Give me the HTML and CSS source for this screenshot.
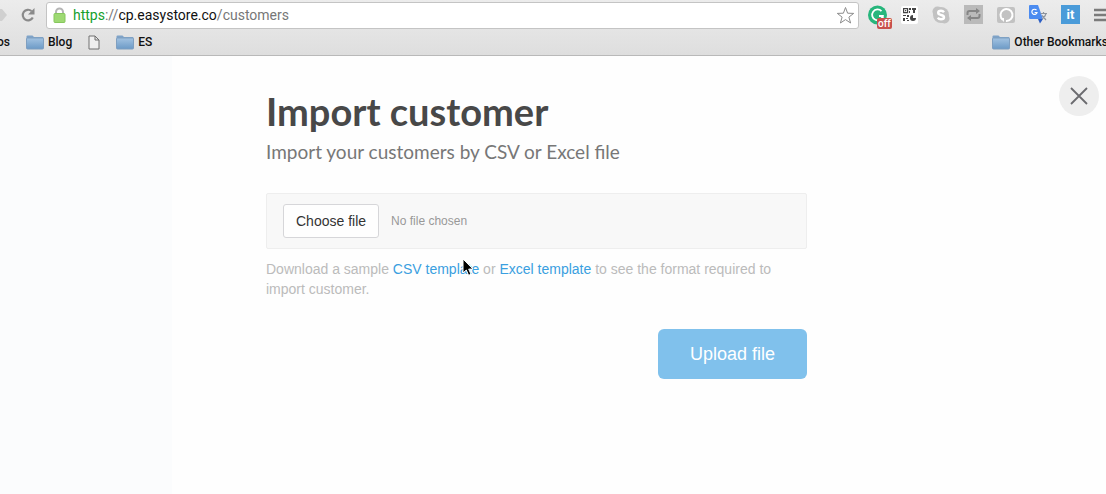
FILE: index.html
```html
<!DOCTYPE html>
<html lang="en">
<head>
    <meta charset="UTF-8">
    <meta name="viewport" content="width=device-width, initial-scale=1.0">
    <title>Import customer</title>
    <link rel="stylesheet" href="styles.css">
</head>
<body>
    <svg width="0" height="0" class="defs" aria-hidden="true">
        <defs>
            <linearGradient id="folderFill" x1="0" y1="0" x2="0" y2="1">
                <stop offset="0" stop-color="#a3c3e2"/>
                <stop offset="1" stop-color="#6c9ac6"/>
            </linearGradient>
            <symbol id="folder" viewBox="0 0 18 15">
                <path d="M0.500 4V1.500q0-1 1-1h5L8 2h8.500q1 0 1 1v1z" fill="#7fa3c8"/>
                <rect x="0.500" y="3" width="17" height="11" rx="1" fill="url(#folderFill)" stroke="#7f9fc0"/>
            </symbol>
        </defs>
    </svg>

    <header class="browser">
        <div class="toolbar">
            <button class="icon-btn" aria-label="Forward">
                <svg width="8" height="16" viewBox="0 0 8 16"><path d="M0 2h2l5 6-5 6H0z" fill="#d0d0d0"/></svg>
            </button>
            <button class="icon-btn reload" aria-label="Reload">
                <svg width="16" height="16" viewBox="0 0 16 16">
                    <path d="M12.800 10.500A5.300 5.300 0 1 1 11.500 4" fill="none" stroke="#8a8a8a" stroke-width="2.200"/>
                    <path d="M14.500 1v6.500H8z" fill="#8a8a8a"/>
                </svg>
            </button>
            <div class="address">
                <svg width="13" height="17" viewBox="0 0 13 17">
                    <path d="M3 8V5a3.500 3.500 0 0 1 7 0v3" fill="none" stroke="#b5b5b5" stroke-width="2"/>
                    <rect x="1" y="6.500" width="11" height="9" rx="1" fill="#9ed973" stroke="#86c75d"/>
                </svg>
                <span class="url"><span class="scheme">https</span><span class="dim">://</span>cp.easystore.co<span class="dim">/customers</span></span>
                <button class="icon-btn" aria-label="Bookmark this page">
                    <svg width="19" height="19" viewBox="0 0 19 19">
                        <path d="M9.500 1.500l2.100 5.700 6.100.2-4.800 3.700 1.700 5.900-5.100-3.400L4.400 17l1.700-5.900L1.300 7.400l6.100-.2z" fill="#fff" stroke="#8c8c8c" stroke-linejoin="round"/>
                    </svg>
                </button>
            </div>
            <div class="extensions">
                <button class="icon-btn" aria-label="Grammar checker">
                    <svg width="19" height="20" viewBox="0 0 19 20">
                        <circle cx="9.500" cy="10" r="9.500" fill="#27b67c"/>
                        <path d="M13.500 6.200A5.400 5.400 0 1 0 14.800 11H11M14.800 10.500v4" fill="none" stroke="#fff" stroke-width="1.800"/>
                    </svg>
                    <span class="badge">off</span>
                </button>
                <button class="icon-btn" aria-label="QR code">
                    <svg width="17" height="18" viewBox="0 0 17 18">
                        <rect width="17" height="18" rx="2" fill="#fff"/>
                        <path d="M2.600 2.600h4v4h-4z" fill="none" stroke="#444" stroke-width="1.200"/>
                        <path d="M4 4h1.300v1.300H4zM8 2h2v2H8zM8 5h1v2H8zM11 2h4v2h-1v3h-2V4h-1zM2 9h3v1H2zM6 9h2v2H6zM2 12h2v3H2zM5 12h2v1H5zM6 14h2v1H6z" fill="#444"/>
                        <path d="M12 9v3h3a3 3 0 0 1-6 0 3 3 0 0 1 3-3z" fill="#444"/>
                    </svg>
                </button>
                <button class="icon-btn" aria-label="Skype">
                    <svg width="18" height="18" viewBox="0 0 18 18">
                        <circle cx="5.500" cy="5.500" r="5" fill="#c2c2c2"/><circle cx="12.500" cy="12.500" r="5" fill="#c2c2c2"/><circle cx="9" cy="9" r="8" fill="#c2c2c2"/>
                        <path d="M12 6.200Q11 4.800 9 4.800 6.200 4.800 6.200 6.800 6.200 8.400 9 9 12 9.600 12 11.300 12 13.300 9 13.300 6.700 13.300 5.800 11.700" fill="none" stroke="#fff" stroke-width="2.400"/>
                    </svg>
                </button>
                <button class="icon-btn" aria-label="Repeat">
                    <svg width="19" height="19" viewBox="0 0 19 19">
                        <rect width="19" height="19" fill="#bababa"/>
                        <path d="M3.500 10V8q0-2 2-2H13M15.500 9v2q0 2-2 2H6" fill="none" stroke="#858585" stroke-width="2"/>
                        <path d="M12 3l4 3-4 3zM7 10l-4 3 4 3z" fill="#858585"/>
                    </svg>
                </button>
                <button class="icon-btn" aria-label="Chat">
                    <svg width="18" height="18" viewBox="0 0 18 18">
                        <rect y="1" width="18" height="16" rx="2" fill="#c2c2c2"/>
                        <path d="M5.500 13.500A6 6 0 1 1 9 15" fill="none" stroke="#fff" stroke-width="2"/>
                        <path d="M3 12h4v4z" fill="#fff"/>
                    </svg>
                </button>
                <button class="icon-btn" aria-label="Translate">
                    <svg width="18" height="19" viewBox="0 0 18 19">
                        <path d="M1 0h8l5 14H1q-1 0-1-1V1q0-1 1-1z" fill="#4b8bf0"/>
                        <path d="M9 14h5l-3 4.500z" fill="#2d5fc4"/>
                        <path d="M7.500 5.200A2.600 2.600 0 1 0 8 7.500H5.600" fill="none" stroke="#fff" stroke-width="1.200"/>
                        <path d="M11.500 8.500H18M14.500 7v1.500M17 8.500q-1 4-4 5.500M13 10.500l4 4.500" fill="none" stroke="#8d949e" stroke-width="1.200"/>
                    </svg>
                </button>
                <button class="icon-btn it-btn">it</button>
                <button class="icon-btn" aria-label="Menu">
                    <svg width="12" height="14" viewBox="0 0 12 14"><path d="M0 2h12M0 7h12M0 12h12" stroke="#7b7b7b" stroke-width="2.500"/></svg>
                </button>
            </div>
        </div>
        <nav class="bookmarks">
            <a href="#" class="apps">os</a>
            <a href="#"><svg width="18" height="15"><use href="#folder"/></svg>Blog</a>
            <a href="#" aria-label="Untitled">
                <svg width="12" height="15" viewBox="0 0 12 15"><path d="M1 1h6l4 4v9H1zM7 1v4h4" fill="#f0f0f0" stroke="#707070"/></svg>
            </a>
            <a href="#"><svg width="18" height="15"><use href="#folder"/></svg>ES</a>
            <a href="#" class="other"><svg width="18" height="15"><use href="#folder"/></svg>Other Bookmarks</a>
        </nav>
    </header>

    <main class="page">
        <button class="close" aria-label="Close">
            <svg width="18" height="18" viewBox="0 0 18 18"><path d="M1 1l16 16M17 1L1 17" stroke="#6b6b6f" stroke-width="1.800"/></svg>
        </button>
        <form class="import">
            <h1>Import customer</h1>
            <p class="lead">Import your customers by CSV or Excel file</p>
            <div class="file-box">
                <button type="button" class="choose">Choose file</button>
                <span class="file-name">No file chosen</span>
            </div>
            <p class="hint">Download a sample <a href="#">CSV template</a> or <a href="#">Excel template</a> to see the format required to import customer.</p>
            <button type="submit" class="upload">Upload file</button>
        </form>
        <svg class="cursor" width="13" height="19" viewBox="0 0 13 19" aria-hidden="true">
            <path d="M1 1v14l3.300-3 2.300 5.300 2.400-1-2.300-5.200H11z" fill="#000" stroke="#fff"/>
        </svg>
    </main>
</body>
</html>
```
FILE: styles.css
```css
* {
    box-sizing: border-box;
}

body {
    margin: 0;
    min-height: 100vh;
    display: flex;
    flex-direction: column;
    background: #fefefe;
    font-family: 'Liberation Sans', Arial, sans-serif;
    overflow: hidden;
}

button {
    font-family: inherit;
    cursor: pointer;
}

a {
    text-decoration: none;
}

svg {
    display: block;
    flex: none;
}

.defs {
    position: absolute;
}

/* Browser bar */
.browser {
    height: 56px;
    background: linear-gradient(#ececec, #dedede);
    border-bottom: 1px solid #b9b9b9;
    font-family: Roboto, sans-serif;
}

.toolbar {
    height: 29px;
    display: flex;
    align-items: center;
}

.icon-btn {
    padding: 0;
    border: none;
    background: none;
    position: relative;
}

.reload {
    margin: 0 10px 0 12px;
}

.address {
    flex: 1;
    height: 27px;
    margin-top: 1px;
    padding: 0 3px 0 6px;
    display: flex;
    align-items: center;
    gap: 7px;
    background: #fff;
    border: 1px solid #c4c4c4;
    border-radius: 3px;
}

.url {
    flex: 1;
    font-size: 14px;
    color: #111;
}

.scheme {
    color: #14a02c;
}

.dim {
    color: #777;
}

.extensions {
    margin-left: 9px;
    display: flex;
    align-items: center;
    gap: 14px;
}

.badge {
    position: absolute;
    left: 9px;
    top: 13px;
    padding: 0 1px;
    background: #c9514b;
    border-radius: 2px;
    color: #fff;
    font-size: 10px;
    font-weight: 500;
    line-height: 11px;
}

.it-btn {
    width: 19px;
    height: 19px;
    background: #4a9bd9;
    color: #fff;
    font-size: 13px;
    font-weight: bold;
    line-height: 19px;
}

.bookmarks {
    height: 26px;
    display: flex;
    align-items: center;
    gap: 16px;
}

.bookmarks a {
    display: flex;
    align-items: center;
    gap: 4px;
    color: #111;
    font-size: 12px;
    font-weight: 500;
    white-space: nowrap;
}

/* both ends of the bar run past the window edge */
.bookmarks .apps {
    margin-left: -3px;
}

.bookmarks .other {
    margin: 0 -2px 0 auto;
}

/* Import page */
.page {
    flex: 1;
    position: relative;
    padding: 31px 299px 32px 266px;
    background: linear-gradient(90deg, #fbfcfd 172px, #fefefe 172px);
}

.import {
    max-width: 541px;
    display: flex;
    flex-direction: column;
}

h1 {
    margin: 0;
    color: #484848;
    font-family: Lato, sans-serif;
    font-size: 38px;
    line-height: 48px;
}

.lead {
    margin: 4px 0 0;
    color: #777;
    font-family: Lato, sans-serif;
    font-size: 19px;
    line-height: 26px;
}

.file-box {
    height: 56px;
    margin-top: 28px;
    padding: 0 16px;
    display: flex;
    align-items: center;
    gap: 12px;
    background: #f8f8f8;
    border: 1px solid #eee;
    border-radius: 2px;
}

.choose {
    height: 34px;
    padding: 0 12px;
    background: #fefefe;
    border: 1px solid #d6d6d9;
    border-radius: 3px;
    color: #333;
    font-size: 14px;
}

.file-name {
    color: #999;
    font-size: 12px;
}

.hint {
    margin: 10px 0 0;
    color: #bbb;
    font-size: 14px;
    line-height: 20px;
}

.hint a {
    color: #3a9fe0;
}

.upload {
    align-self: flex-end;
    height: 50px;
    margin-top: 30px;
    padding: 0 32px;
    background: #80c1ec;
    border: none;
    border-radius: 6px;
    color: #fff;
    font-size: 18px;
}

.close {
    position: absolute;
    top: 20px;
    right: 7px;
    width: 40px;
    height: 40px;
    padding: 0;
    display: grid;
    place-items: center;
    background: #eee;
    border: none;
    border-radius: 50%;
}

.cursor {
    position: absolute;
    left: 462px;
    top: 202px;
}
```
